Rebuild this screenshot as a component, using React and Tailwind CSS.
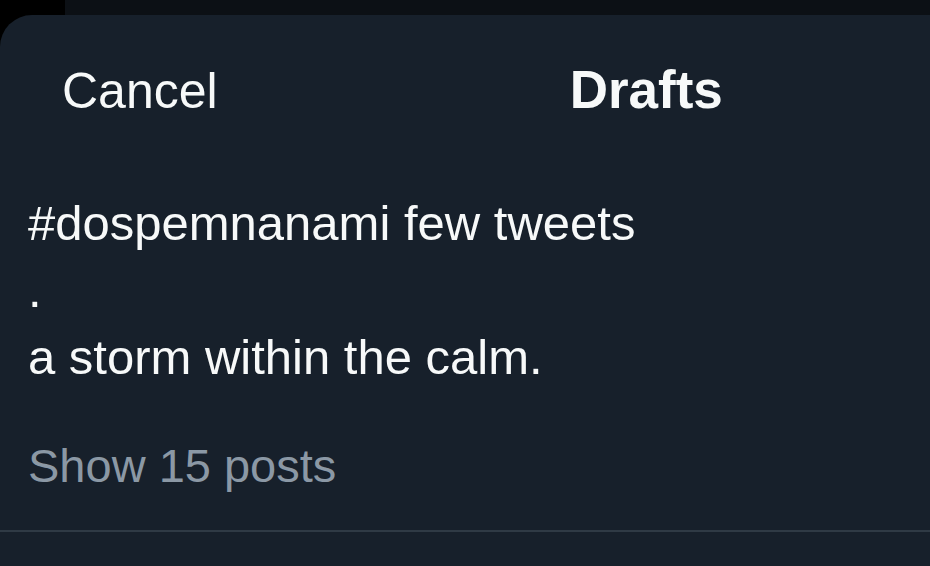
export default function App() {
  return (
    <div className="flex h-[566px] w-[930px] flex-col overflow-hidden bg-[#0c1015] font-['Liberation_Sans',Arial,sans-serif]">
      <div className="flex h-[15px] shrink-0">
        <div className="w-[65px] bg-black" />
        <div className="flex-1 bg-[#0c1015]" />
      </div>
      <div className="flex flex-1 flex-col bg-black">
        <div className="flex flex-1 flex-col rounded-tl-[32px] bg-[#17202b]">
          <div className="flex h-[125px] items-baseline pl-[62px] pt-[48px]">
            <span className="text-[50px] leading-none text-[#f7f9f9]">Cancel</span>
            <span className="ml-[352px] text-[53px] font-bold leading-none text-[#f7f9f9]">Drafts</span>
          </div>
          <div className="pl-[28px] pt-[50px] text-[49px] leading-[67px] text-[#f7f9f9]">
            <p>#dospemnanami few tweets</p>
            <p>.</p>
            <p>a storm within the calm.</p>
          </div>
          <div className="mt-[51px] pl-[28px] text-[47px] leading-none text-[#8b98a5]">Show 15 posts</div>
          <div className="mt-[41px] h-[2px] bg-[#2f3a45]" />
        </div>
      </div>
    </div>
  )
}
